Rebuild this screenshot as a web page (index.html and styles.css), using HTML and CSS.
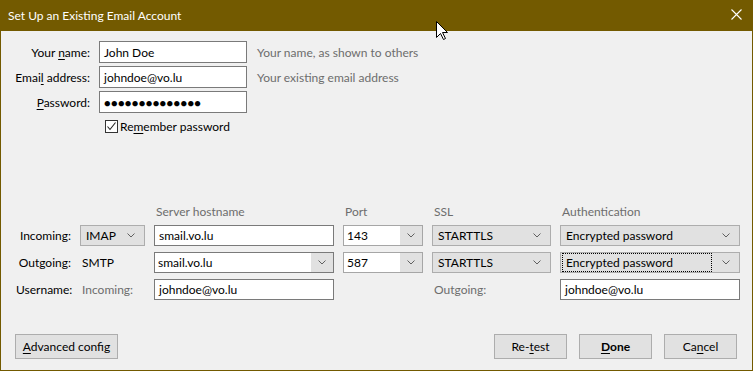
FILE: index.html
```html
<!DOCTYPE html>
<html lang="en">
<head>
    <meta charset="UTF-8">
    <title>Set Up an Existing Email Account</title>
    <link rel="stylesheet" href="styles.css">
</head>
<body>
    <div class="window">
        <div class="titlebar">
            <span class="title">Set Up an Existing Email Account</span>
            <svg class="close-icon" width="11" height="11" viewBox="0 0 11 11">
                <path d="M0.5,0.5 L10.5,10.5 M10.5,0.5 L0.5,10.5" stroke="#fff" stroke-width="1.1" fill="none"/>
            </svg>
        </div>

        <div class="account-form">
            <label class="field-label">Your <u>n</u>ame:</label>
            <div class="text-input">John Doe</div>
            <span class="hint">Your name, as shown to others</span>

            <label class="field-label">Emai<u>l</u> address:</label>
            <div class="text-input">johndoe@vo.lu</div>
            <span class="hint">Your existing email address</span>

            <label class="field-label"><u>P</u>assword:</label>
            <div class="text-input password">&#9679;&#9679;&#9679;&#9679;&#9679;&#9679;&#9679;&#9679;&#9679;&#9679;&#9679;&#9679;&#9679;&#9679;</div>
            <span></span>
        </div>

        <div class="remember-row">
            <span class="checkbox">
                <svg width="11" height="11" viewBox="0 0 11 11">
                    <path d="M1.5,5.5 L4,8.5 L9.5,1.5" stroke="#222" stroke-width="1.1" fill="none"/>
                </svg>
            </span>
            <span>Re<u>m</u>ember password</span>
        </div>

        <div class="server-grid">
            <span></span>
            <span></span>
            <span class="col-head">Server hostname</span>
            <span class="col-head">Port</span>
            <span class="col-head">SSL</span>
            <span class="col-head">Authentication</span>

            <span class="row-label">Incoming:</span>
            <div class="select">
                <span class="sel-text">IMAP</span>
                <svg class="chevron" width="8" height="5" viewBox="0 0 8 5"><path d="M0.5,0.5 L4,4 L7.5,0.5" stroke="#606060" fill="none"/></svg>
            </div>
            <div class="text-input small">smail.vo.lu</div>
            <div class="combo">
                <span class="combo-text">143</span>
                <span class="combo-btn"><svg width="8" height="5" viewBox="0 0 8 5"><path d="M0.5,0.5 L4,4 L7.5,0.5" stroke="#606060" fill="none"/></svg></span>
            </div>
            <div class="select">
                <span class="sel-text">STARTTLS</span>
                <svg class="chevron" width="8" height="5" viewBox="0 0 8 5"><path d="M0.5,0.5 L4,4 L7.5,0.5" stroke="#606060" fill="none"/></svg>
            </div>
            <div class="select">
                <span class="sel-text">Encrypted password</span>
                <svg class="chevron" width="8" height="5" viewBox="0 0 8 5"><path d="M0.5,0.5 L4,4 L7.5,0.5" stroke="#606060" fill="none"/></svg>
            </div>

            <span class="row-label">Outgoing:</span>
            <span class="plain">SMTP</span>
            <div class="combo dark">
                <span class="combo-text">smail.vo.lu</span>
                <span class="combo-btn"><svg width="8" height="5" viewBox="0 0 8 5"><path d="M0.5,0.5 L4,4 L7.5,0.5" stroke="#606060" fill="none"/></svg></span>
            </div>
            <div class="combo">
                <span class="combo-text">587</span>
                <span class="combo-btn"><svg width="8" height="5" viewBox="0 0 8 5"><path d="M0.5,0.5 L4,4 L7.5,0.5" stroke="#606060" fill="none"/></svg></span>
            </div>
            <div class="select">
                <span class="sel-text">STARTTLS</span>
                <svg class="chevron" width="8" height="5" viewBox="0 0 8 5"><path d="M0.5,0.5 L4,4 L7.5,0.5" stroke="#606060" fill="none"/></svg>
            </div>
            <div class="select focused">
                <span class="sel-text">Encrypted password</span>
                <svg class="chevron" width="8" height="5" viewBox="0 0 8 5"><path d="M0.5,0.5 L4,4 L7.5,0.5" stroke="#606060" fill="none"/></svg>
            </div>

            <span class="row-label">Username:</span>
            <span class="plain muted">Incoming:</span>
            <div class="text-input small">johndoe@vo.lu</div>
            <span></span>
            <span class="plain muted">Outgoing:</span>
            <div class="text-input small">johndoe@vo.lu</div>
        </div>

        <div class="button-bar">
            <button type="button" class="dlg-button wide"><u>A</u>dvanced config</button>
            <span class="spacer"></span>
            <button type="button" class="dlg-button">Re-<u>t</u>est</button>
            <button type="button" class="dlg-button default"><u>D</u>one</button>
            <button type="button" class="dlg-button">Ca<u>n</u>cel</button>
        </div>
    </div>

    <svg class="cursor" width="13" height="20" viewBox="0 0 13 20">
        <path d="M0.5,0.5 L0.5,16.5 L4.5,12.5 L7.5,18.5 L9.5,17.5 L6.5,11.5 L11.5,11.5 Z" fill="#fff" stroke="#000" stroke-width="1"/>
    </svg>
</body>
</html>
```

FILE: styles.css
```css
html, body {
    margin: 0;
    padding: 0;
    width: 753px;
    height: 371px;
    overflow: hidden;
    background-color: #f0f0f0;
}

body {
    font-family: "Segoe UI", "Lato", sans-serif;
    font-size: 12px;
    color: #000;
    position: relative;
}

u {
    text-decoration-thickness: 1px;
    text-underline-offset: 2px;
}

.window {
    width: 753px;
    height: 371px;
    box-sizing: border-box;
    display: flex;
    flex-direction: column;
    border: 1px solid #735a00;
    border-top: 0;
    background-color: #f0f0f0;
}

.titlebar {
    height: 31px;
    margin: 0 -1px;
    background-color: #735a00;
    color: #fff;
    display: flex;
    align-items: center;
    padding: 0 11px 0 8px;
    flex-shrink: 0;
}

.title {
    flex: 1;
    padding-bottom: 1px;
}

.close-icon {
    display: block;
    margin-bottom: 2px;
}

/* top part: name / email / password */
.account-form {
    display: grid;
    grid-template-columns: 89px 148px 1fr;
    grid-auto-rows: 22px;
    column-gap: 9px;
    row-gap: 3px;
    margin-top: 10px;
}

.field-label {
    text-align: right;
    align-self: center;
}

.hint {
    color: #6d6d6d;
    align-self: center;
    padding-left: 1px;
}

.text-input {
    box-sizing: border-box;
    height: 22px;
    border: 1px solid #7a7a7a;
    background-color: #fff;
    padding: 0 4px;
    display: flex;
    align-items: center;
    white-space: nowrap;
    overflow: hidden;
}

.text-input.small {
    height: 21px;
}

.text-input.password {
    font-size: 11px;
    letter-spacing: 0.35px;
}

.remember-row {
    display: flex;
    align-items: center;
    gap: 2px;
    height: 16px;
    margin: 5px 0 0 104px;
}

.checkbox {
    width: 13px;
    height: 13px;
    box-sizing: border-box;
    border: 1px solid #333;
    background-color: #fff;
    display: flex;
    align-items: center;
    justify-content: center;
}

.checkbox svg {
    display: block;
}

/* server settings table */
.server-grid {
    display: grid;
    grid-template-columns: 55px 65px 180px 80px 119px 180px;
    grid-template-rows: 15px 21px 21px 21px;
    column-gap: 9px;
    row-gap: 6px;
    margin: 70px 0 0 15px;
}

.col-head {
    color: #6d6d6d;
    padding-left: 2px;
    align-self: end;
    line-height: 15px;
}

.row-label {
    align-self: center;
    text-align: right;
}

.plain {
    align-self: center;
    padding-left: 2px;
}

.muted {
    color: #6d6d6d;
}

.select {
    box-sizing: border-box;
    height: 21px;
    border: 1px solid #adadad;
    background-color: #e1e1e1;
    display: flex;
    align-items: center;
    padding: 0 9px 0 5px;
}

.sel-text {
    flex: 1;
    white-space: nowrap;
}

.chevron {
    display: block;
}

.select.focused {
    padding-left: 0;
}

.select.focused .sel-text {
    align-self: stretch;
    display: flex;
    align-items: center;
    border: 1px dotted #000;
    margin: 0 10px 0 1px;
    padding-left: 3px;
}

.combo {
    box-sizing: border-box;
    height: 21px;
    border: 1px solid #a6a6a6;
    background-color: #fff;
    display: flex;
    align-items: stretch;
}

.combo.dark {
    border-color: #7a7a7a;
}

.combo-text {
    flex: 1;
    display: flex;
    align-items: center;
    padding-left: 3px;
}

.combo-btn {
    width: 22px;
    background-color: #e1e1e1;
    display: flex;
    align-items: center;
    justify-content: center;
}

.combo-btn svg {
    display: block;
}

/* bottom buttons */
.button-bar {
    margin-top: auto;
    display: flex;
    gap: 12px;
    padding: 0 15px 11px 14px;
}

.spacer {
    flex: 1;
}

.dlg-button {
    box-sizing: border-box;
    width: 73px;
    height: 25px;
    border: 1px solid #adadad;
    background-color: #e1e1e1;
    font-family: inherit;
    font-size: 12px;
    color: #000;
    padding: 0;
}

.dlg-button.wide {
    width: 103px;
}

.dlg-button.default {
    font-weight: bold;
}

.cursor {
    position: absolute;
    left: 436px;
    top: 21px;
}
```
